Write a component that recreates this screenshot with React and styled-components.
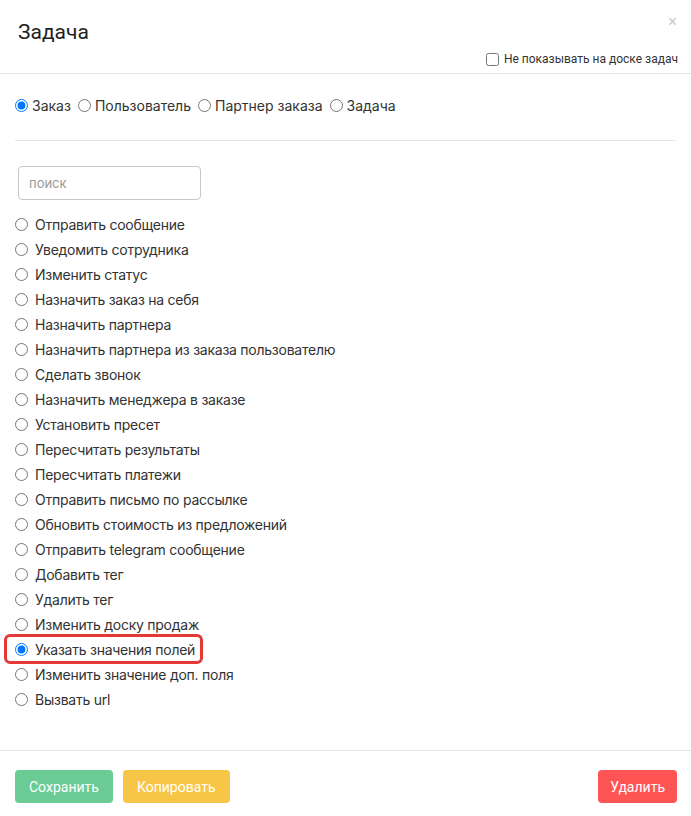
import React from 'react';
import styled, { createGlobalStyle } from 'styled-components';

const GlobalStyle = createGlobalStyle`
  html, body {
    margin: 0;
    padding: 0;
    background: #fff;
  }
  body {
    font-family: Roboto, "Liberation Sans", sans-serif;
    color: #333;
  }
`;

const Modal = styled.div`
  width: 691px;
  min-height: 816px;
  background: #fff;
  display: flex;
  flex-direction: column;
`;

const Header = styled.div`
  position: relative;
  height: 74px;
  border-bottom: 1px solid #e2e2e2;
  box-sizing: border-box;
  padding: 18px 13px 0 18px;
`;

const Title = styled.h4`
  margin: 0;
  font-family: Roboto, sans-serif;
  font-weight: 400;
  font-size: 21px;
  line-height: 28px;
  color: #222;
`;

const Close = styled.button`
  position: absolute;
  top: 12px;
  right: 14px;
  border: 0;
  background: none;
  padding: 0;
  font-size: 16px;
  line-height: 20px;
  color: #c4c4c4;
  font-family: Arial, sans-serif;
  cursor: pointer;
`;

const HideRow = styled.label`
  position: absolute;
  right: 13px;
  top: 52px;
  display: flex;
  align-items: center;
  gap: 5px;
  font-family: Roboto, sans-serif;
  font-size: 12px;
  color: #333;
`;

const Checkbox = styled.input.attrs({ type: 'checkbox' })`
  margin: 0;
  width: 13px;
  height: 13px;
`;

const Body = styled.div`
  flex: 1;
  padding: 20px 15px 0 15px;
`;

const TypeRow = styled.div`
  display: flex;
  align-items: center;
  gap: 7px;
  height: 23px;
  font-family: Inter, sans-serif;
  font-size: 14px;
  color: #333;
`;

const Option = styled.label`
  display: inline-flex;
  align-items: center;
  gap: 4px;
  cursor: pointer;
`;

const Radio = styled.input.attrs({ type: 'radio' })`
  margin: 0;
  width: 13px;
  height: 13px;
  accent-color: #0075ff;
`;

const Divider = styled.hr`
  border: 0;
  border-top: 1px solid #e6e6e6;
  margin: 23px 0 25px 0;
`;

const Search = styled.input`
  box-sizing: border-box;
  width: 183px;
  height: 34px;
  margin: 0 0 12px 3px;
  border: 1px solid #c8c8c8;
  border-radius: 4px;
  padding: 0 10px;
  font-family: Inter, sans-serif;
  font-size: 13px;
  color: #333;
  outline: none;

  &::placeholder {
    color: #999;
  }
`;

const ActionList = styled.div`
  display: flex;
  flex-direction: column;
  align-items: flex-start;
  font-family: Inter, sans-serif;
  font-size: 14px;
  letter-spacing: -0.25px;
  color: #333;
`;

const ActionItem = styled(Option)`
  position: relative;
  height: 25px;
  gap: 7px;

  ${p => p.$marked && `
    &::after {
      content: '';
      position: absolute;
      left: -11px;
      right: -8px;
      top: -3px;
      bottom: -2px;
      border: 3px solid #e53935;
      border-radius: 6px;
      pointer-events: none;
    }
  `}
`;

const Footer = styled.div`
  border-top: 1px solid #e2e2e2;
  margin-top: 35px;
  padding: 19px 14px 13px 15px;
  display: flex;
  align-items: center;
  gap: 10px;
`;

const Button = styled.button`
  height: 33px;
  border: 0;
  border-radius: 4px;
  padding: 0 ${p => (p.$right ? 12 : 14)}px;
  font-family: Roboto, sans-serif;
  font-size: 14px;
  color: #fff;
  background: ${p => p.$bg};
  cursor: pointer;
  margin-left: ${p => (p.$right ? 'auto' : '0')};
`;

const actions = [
  'Отправить сообщение',
  'Уведомить сотрудника',
  'Изменить статус',
  'Назначить заказ на себя',
  'Назначить партнера',
  'Назначить партнера из заказа пользователю',
  'Сделать звонок',
  'Назначить менеджера в заказе',
  'Установить пресет',
  'Пересчитать результаты',
  'Пересчитать платежи',
  'Отправить письмо по рассылке',
  'Обновить стоимость из предложений',
  'Отправить telegram сообщение',
  'Добавить тег',
  'Удалить тег',
  'Изменить доску продаж',
  'Указать значения полей',
  'Изменить значение доп. поля',
  'Вызвать url',
];

const targets = ['Заказ', 'Пользователь', 'Партнер заказа', 'Задача'];

export default function App() {
  return (
    <>
      <GlobalStyle />
      <Modal>
        <Header>
          <Title>Задача</Title>
          <Close>×</Close>
          <HideRow>
            <Checkbox />
            Не показывать на доске задач
          </HideRow>
        </Header>

        <Body>
          <TypeRow>
            {targets.map((t, i) => (
              <Option key={t}>
                <Radio name="target" defaultChecked={i === 0} />
                {t}
              </Option>
            ))}
          </TypeRow>

          <Divider />

          <Search placeholder="поиск" />

          <ActionList>
            {actions.map(a => (
              <ActionItem key={a} $marked={a === 'Указать значения полей'}>
                <Radio name="action" defaultChecked={a === 'Указать значения полей'} />
                {a}
              </ActionItem>
            ))}
          </ActionList>
        </Body>

        <Footer>
          <Button $bg="#6acb95">Сохранить</Button>
          <Button $bg="#f8c646">Копировать</Button>
          <Button $bg="#ff5454" $right>Удалить</Button>
        </Footer>
      </Modal>
    </>
  );
}
